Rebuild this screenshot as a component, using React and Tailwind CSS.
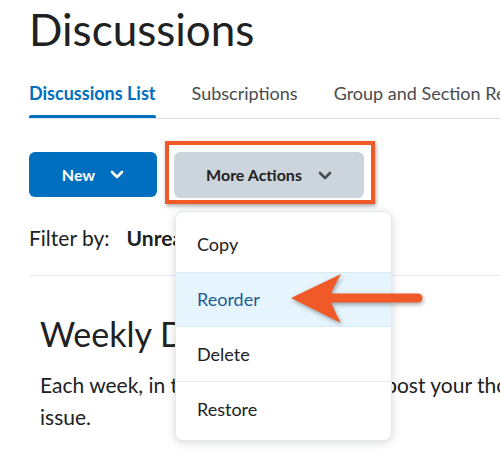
import React from 'react'

function Chevron({ className }) {
  return (
    <svg viewBox="0 0 14 9" className={className} fill="none">
      <path d="M2 2l5 5 5-5" stroke="currentColor" strokeWidth="2.6" strokeLinecap="round" strokeLinejoin="round" />
    </svg>
  )
}

const menuItems = ['Copy', 'Reorder', 'Delete', 'Restore']

export default function App() {
  return (
    <div className="relative w-[500px] h-[460px] overflow-hidden bg-white font-['Lato',sans-serif] text-[#494c4e]">
      <div className="w-[900px] pl-[29px]">
        <h1 className="mt-[4px] text-[44px] leading-[50px] text-[#202122]">Discussions</h1>

        {/* tabs */}
        <div className="mt-[29px] flex gap-[36px] border-b border-[#dfe4ea]">
          <div className="flex flex-col">
            <span className="text-[18px] leading-[20px] font-bold text-[#006fbf] pb-[12px]">Discussions List</span>
            <span className="h-[3px] rounded-t-[2px] bg-[#006fbf]" />
          </div>
          <span className="text-[18px] leading-[20px] pb-[15px] text-[#494c4e]">Subscriptions</span>
          <span className="text-[18px] leading-[20px] pb-[15px] text-[#494c4e]">Group and Section Restrictions</span>
        </div>

        {/* buttons */}
        <div className="mt-[22px] flex items-start">
          <button className="mt-[11px] w-[128px] h-[45px] rounded-[6px] bg-[#006fbf] text-white text-[16px] font-bold flex items-center justify-center gap-[15px]">
            New
            <Chevron className="w-[14px] h-[9px]" />
          </button>
          <div className="ml-[8px] border-[4px] border-[#f05a28] pl-[5px] pr-[7px] pt-[7px] pb-[2px] shadow-[1px_2px_4px_rgba(0,0,0,0.35)]">
            <button className="w-[190px] h-[46px] rounded-[6px] bg-[#cdd5dc] text-[#202122] text-[16px] font-bold flex items-center justify-center gap-[16px]">
              More Actions
              <Chevron className="w-[14px] h-[9px] text-[#494c4e]" />
            </button>
          </div>
        </div>

        {/* filter */}
        <div className="mt-[22px] flex gap-[17px] text-[21px] leading-[24px] text-[#202122]">
          <span>Filter by:</span>
          <span className="font-bold">Unread Posts</span>
        </div>

        <div className="mt-[25px] border-t border-[#e3e9f1]" />

        <div className="pl-[11px]">
          <h2 className="mt-[38px] text-[34px] leading-[40px] text-[#202122]">Weekly Discussion</h2>
          <p className="mt-[15px] text-[21px] leading-[32px] text-[#202122] whitespace-nowrap">
            Each week, in the discussion threads, post your thoughts on this week&apos;s
            <br />
            issue.
          </p>
        </div>
      </div>

      {/* dropdown menu */}
      <div className="absolute left-[175px] top-[211px] w-[217px] h-[230px] rounded-[8px] border border-[#e3e9f1] bg-white shadow-[0_2px_10px_rgba(0,0,0,0.15)] py-[5px]">
        {menuItems.map((item, i) => (
          <div
            key={item}
            className={
              'h-[55px] flex items-center pl-[21px] text-[18px] ' +
              (item === 'Reorder'
                ? 'bg-[#e6f5fd] text-[#1e5b96] border-y border-[#d8ecf8]'
                : 'text-[#202122] ' + (i < 3 && menuItems[i + 1] !== 'Reorder' ? 'border-b border-[#e8ecf0]' : ''))
            }
          >
            {item}
          </div>
        ))}
      </div>

      {/* arrow annotation */}
      <svg className="absolute left-[280px] top-[265px] w-[150px] h-[65px] drop-shadow-[1px_2px_2px_rgba(0,0,0,0.35)]" viewBox="0 0 150 65">
        <line x1="50" y1="33" x2="138" y2="33" stroke="#f05a28" strokeWidth="9" strokeLinecap="round" />
        <path d="M11 33 L61 9 Q52 24 50 33 Q52 42 61 58 Z" fill="#f05a28" />
      </svg>
    </div>
  )
}
